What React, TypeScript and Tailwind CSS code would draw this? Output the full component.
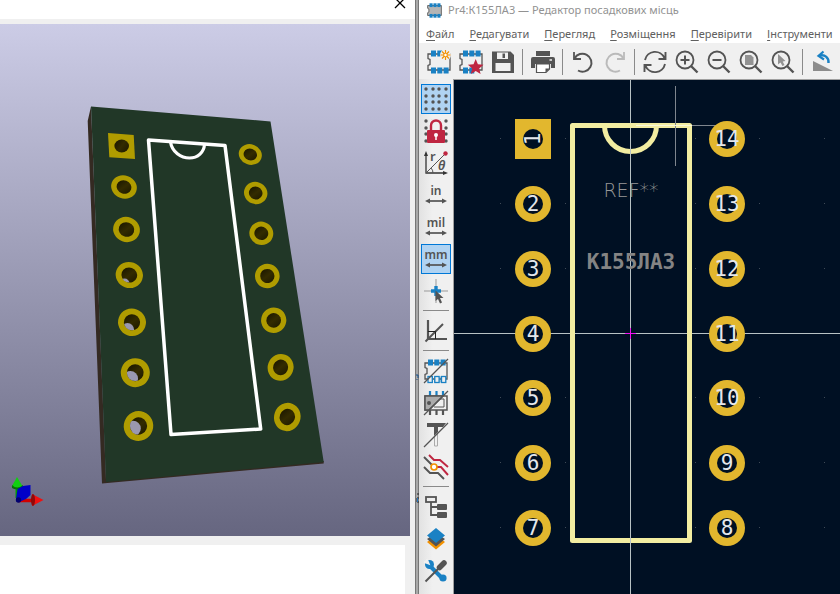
import type { ReactNode } from "react";

const INK = "#545454";
const BLUE = "#1a81c4";
const RED = "#bf2641";
const ORANGE = "#f29100";

function Icon({ children, size = 24 }: { children: ReactNode; size?: number }) {
  return (
    <svg width={size} height={size} viewBox="0 0 24 24" fill="none" stroke={INK} strokeWidth="1.5" aria-hidden="true" className="shrink-0 overflow-visible">
      {children}
    </svg>
  );
}

const OUTLINE = "M1 4H23V20H1V15.5L3 14.5V9.5L1 8.5Z";

function Chip({ fill = "none", top = 3, bottom = 3 }: { fill?: string; top?: number; bottom?: number }) {
  const xs = [4, 10.3, 16.6];
  return (
    <>
      <path d={OUTLINE} fill={fill} strokeWidth="1.3" />
      <g fill={BLUE} stroke="none">
        {xs.slice(0, top).map((x) => <rect key={x} x={x} y="0.5" width="5" height="6" />)}
        {xs.slice(0, bottom).map((x) => <rect key={x} x={x} y="17.5" width="5" height="6" />)}
      </g>
    </>
  );
}

const newIcon = (
  <Icon>
    <Chip top={2} />
    <circle cx="18.5" cy="5" r="5.5" fill="#f0f0f0" stroke="none" />
    <path d="M18.5 0v10M13.5 5h10M15 1.5l7 7M22 1.5l-7 7" stroke={ORANGE} strokeWidth="1.2" />
    <circle cx="18.5" cy="5" r="1.8" fill="#fff" stroke={ORANGE} strokeWidth="1" />
  </Icon>
);
const libraryIcon = (
  <Icon>
    <Chip bottom={2} />
    <path d="M16.7 9l2.2 5.3 5.6.4-4.300 3.700 1.400 5.500-4.900-3-4.900 3 1.400-5.500-4.300-3.700 5.600-.4z" fill={RED} stroke="none" />
  </Icon>
);
const saveIcon = (
  <Icon>
    <path d="M1 1.5H19.5L23 5V23H1Z" fill={INK} stroke="none" />
    <path d="M6 2.5H17V9H6ZM4.5 13H19.5V21H4.5Z" fill="#f0f0f0" stroke="none" />
    <path d="M11.5 3.5H14V8H11.5Z" fill={INK} stroke="none" />
  </Icon>
);
const printIcon = (
  <Icon>
    <path d="M5 1H19V6H5Z" fill={INK} stroke="none" />
    <path d="M2 7H22Q24 7 24 9V18H20V14H4V18H0V9Q0 7 2 7Z" fill={INK} stroke="none" />
    <path d="M5.5 14H18.5V19L15 22.5H5.5Z" fill="#fff" strokeWidth="1.2" />
    <path d="M18.5 18.5H14.5V22.5Z" fill={INK} stroke="none" />
    <path d="M18.5 10H21" stroke="#f0f0f0" />
  </Icon>
);
const undoIcon = (
  <Icon>
    <path d="M3 2V9H10" strokeWidth="1.8" />
    <path d="M3.5 8.5A9 9 0 1 1 7 20.5" strokeWidth="2" />
  </Icon>
);
const redoIcon = (
  <Icon>
    <g stroke="#bababa">
      <path d="M21 2V9H14" strokeWidth="1.8" />
      <path d="M20.5 8.5A9 9 0 1 0 17 20.5" strokeWidth="2" />
    </g>
  </Icon>
);
const refreshIcon = (
  <Icon>
    <g strokeWidth="1.9">
      <path d="M2 10A10.3 10.3 0 0 1 21.5 8M22.5 2V9H15.5" />
      <path d="M22 14A10.3 10.3 0 0 1 2.5 16M1.5 22V15H8.5" />
    </g>
  </Icon>
);

function Lens({ children }: { children: ReactNode }) {
  return (
    <Icon>
      <circle cx="10" cy="10" r="8.5" strokeWidth="1.8" />
      <path d="M16 16L22.5 22.5" strokeWidth="2.4" />
      {children}
    </Icon>
  );
}
const zoomInIcon = <Lens><path d="M5.5 10H14.5M10 5.5V14.5" strokeWidth="2" /></Lens>;
const zoomOutIcon = <Lens><path d="M5.5 10H14.5" strokeWidth="2" /></Lens>;
const zoomPageIcon = <Lens><path d="M6 5H12L14.5 7.5V15H6Z" fill="#929292" stroke="none" /></Lens>;
const zoomSelectIcon = (
  <Lens><path d="M7 4V14.5L9.5 12.5L11.5 16L13.5 15L11.7 11.5L14.5 11Z" fill="#929292" stroke="none" /></Lens>
);
const rotateIcon = (
  <Icon>
    <path d="M2 11L22 21H2Z" fill="#8c8c8c" stroke="none" />
    <path d="M9 5.5C14 4.5 18 7.5 17.5 13" stroke={BLUE} strokeWidth="2.4" />
    <path d="M12.5 1.5L7.5 5.8L13 9.5" stroke={BLUE} strokeWidth="2.2" />
  </Icon>
);

const GRID = [2, 9, 15, 22];
const dots = (
  <g fill={INK} stroke="none">
    {GRID.flatMap((y) => GRID.map((x) => <circle key={`${x}-${y}`} cx={x} cy={y} r="1.7" />))}
  </g>
);
const gridIcon = <Icon>{dots}</Icon>;
const lockIcon = (
  <Icon>
    {dots}
    <path d="M7 12V6.5A5 5 0 0 1 17 6.5V12" stroke="#f0f0f0" strokeWidth="5" fill="#f0f0f0" />
    <path d="M7 12V6.5A5 5 0 0 1 17 6.5V12" stroke={RED} strokeWidth="2.4" />
    <rect x="3" y="11" width="18" height="13" rx="1" fill={RED} stroke="none" />
    <circle cx="12" cy="16" r="2" fill="#fff" stroke="none" />
    <path d="M12 16V21" stroke="#fff" />
  </Icon>
);
const polarIcon = (
  <Icon>
    <path d="M2 4V22H20" stroke="#333" strokeWidth="1.3" />
    <path d="M2 0L4 5H0ZM24 22L19 20V24Z" fill="#333" stroke="none" />
    <path d="M2 22L21 3M7 17Q9 19 9 22" strokeWidth="1" />
    <circle cx="21.5" cy="2.5" r="2.2" fill={RED} stroke="none" />
    <g fill={INK} stroke="none" className="font-['Noto_Sans',sans-serif]">
      <text x="6" y="10" fontSize="13" fontWeight="600">r</text>
      <text x="14" y="19" fontSize="13" fontWeight="600" fontStyle="italic">θ</text>
    </g>
  </Icon>
);
function Unit({ name }: { name: string }) {
  return (
    <Icon>
      <text x="12" y="12" textAnchor="middle" fontSize="12" fontWeight="600" fill={INK} stroke="none" className="font-['Noto_Sans',sans-serif]">{name}</text>
      <path d="M4 18H20" strokeWidth="1.7" />
      <path d="M1 18L6 15.5V20.5ZM23 18L18 15.5V20.5Z" fill={INK} stroke="none" />
    </Icon>
  );
}
const cursorIcon = (
  <Icon>
    <path d="M12 0V24M0 12H24" stroke="#999" strokeWidth="1" />
    <path d="M12 7V17M7 12H17" stroke={BLUE} strokeWidth="3.4" />
    <path d="M11.5 11.5V22L14 20L16 24.5L18 23.5L16 19L19.5 19Z" fill={INK} stroke="none" />
  </Icon>
);
const angleIcon = (
  <Icon>
    <path d="M4 1V20H23" strokeWidth="2.2" />
    <path d="M1.5 22.5L19 5" strokeWidth="2" />
    <path d="M4 12.5H11.5V20" stroke="#222" strokeWidth="1" />
  </Icon>
);
const padModeIcon = (
  <Icon>
    <Chip />
    <g fill="#f0f0f0" stroke={BLUE} strokeWidth="1.3">
      <rect x="4" y="17.5" width="4.3" height="6" />
      <rect x="10.8" y="17.5" width="4.3" height="6" />
      <rect x="17.5" y="17.5" width="4.3" height="6" />
    </g>
    <path d="M0 24L24 0" strokeWidth="1.3" />
  </Icon>
);
const graphicModeIcon = (
  <Icon>
    <path d="M6 0V5M12.5 0V5M19 0V5" stroke={BLUE} strokeWidth="2.2" />
    <path d="M6 19V24M12.5 19V24M19 19V24" strokeWidth="2.2" />
    <rect x="1" y="5" width="22" height="14" />
    <path d="M1 5H19L5 19H1Z" fill="#ababab" />
    <path d="M16 8H20V16H10" strokeWidth="1" />
    <circle cx="5" cy="12" r="2" fill={INK} stroke="none" />
    <path d="M0 24L24 0" strokeWidth="1.3" />
  </Icon>
);
const textModeIcon = (
  <Icon>
    <path d="M3 0H22L19 4H14V9L10 13V4H3Z" fill={INK} stroke="none" />
    <path d="M10.5 14V23H13.5V10" stroke="#aaa" strokeWidth="1" />
    <path d="M0 24L24 0" strokeWidth="1.3" />
  </Icon>
);
const contrastIcon = (
  <Icon>
    <path d="M0 2L8 10M0 12L6 18H14L20 24" strokeWidth="1.9" />
    <path d="M5 0L10 5H16L24 12M12 12H17L24 20" stroke={RED} strokeWidth="1.9" />
    <circle cx="10" cy="12" r="3" fill="#fff" stroke={ORANGE} strokeWidth="1.7" />
  </Icon>
);
const treeIcon = (
  <Icon>
    <rect x="2" y="2" width="10" height="5" strokeWidth="1.8" />
    <path d="M7 7V20H13M7 12H13" strokeWidth="1.8" />
    <rect x="13" y="9" width="10" height="6" rx="1" fill={INK} stroke="none" />
    <rect x="13" y="17" width="10" height="6" rx="1" fill={INK} stroke="none" />
  </Icon>
);
const layersIcon = (
  <Icon>
    <path d="M3 15L12 8L21 15L12 22.5Z" fill={ORANGE} stroke="none" />
    <path d="M3 12L12 6L21 12L12 19.5Z" fill={INK} stroke="none" />
    <path d="M3 8.5L12 1L21 8.5L12 16Z" fill={BLUE} stroke="none" />
  </Icon>
);
const toolsIcon = (
  <Icon>
    <path d="M6 7L18 19" stroke={BLUE} strokeWidth="4" />
    <circle cx="5.5" cy="5.5" r="4.5" fill={BLUE} stroke="none" />
    <circle cx="19" cy="19" r="3.6" fill={BLUE} stroke="none" />
    <path d="M0 3L5 5L3 0" fill="#f0f0f0" stroke="#f0f0f0" />
    <path d="M1.5 22.5L14 10" strokeWidth="1.9" />
    <path d="M15.5 8.5L20 4" strokeWidth="5.5" strokeLinecap="round" />
  </Icon>
);

type Item = { label: string; icon: ReactNode; on?: boolean } | null;

const topItems: Item[] = [
  { label: "Нове посадкове місце", icon: newIcon },
  { label: "Редактор бібліотеки", icon: libraryIcon },
  { label: "Зберегти", icon: saveIcon },
  null,
  { label: "Друк", icon: printIcon },
  null,
  { label: "Скасувати", icon: undoIcon },
  { label: "Повторити", icon: redoIcon },
  null,
  { label: "Оновити", icon: refreshIcon },
  { label: "Збільшити", icon: zoomInIcon },
  { label: "Зменшити", icon: zoomOutIcon },
  { label: "Вмістити сторінку", icon: zoomPageIcon },
  { label: "Масштабувати вибране", icon: zoomSelectIcon },
  null,
  { label: "Повернути", icon: rotateIcon },
];

const sideItems: Item[] = [
  { label: "Сітка", icon: gridIcon, on: true },
  { label: "Блокування сітки", icon: lockIcon },
  { label: "Полярні координати", icon: polarIcon },
  { label: "Дюйми", icon: <Unit name="in" /> },
  { label: "Міли", icon: <Unit name="mil" /> },
  { label: "Міліметри", icon: <Unit name="mm" />, on: true },
  { label: "Курсор", icon: cursorIcon },
  null,
  { label: "Кут ліній", icon: angleIcon },
  null,
  { label: "Контури майданчиків", icon: padModeIcon },
  { label: "Контури графіки", icon: graphicModeIcon },
  { label: "Контури тексту", icon: textModeIcon },
  { label: "Контраст", icon: contrastIcon },
  null,
  { label: "Дерево", icon: treeIcon },
  { label: "Шари", icon: layersIcon },
  { label: "Властивості", icon: toolsIcon },
];

const menus = ["Файл", "Редагувати", "Перегляд", "Розміщення", "Перевірити", "Інструменти"];

// cx, cy, rx, ry of every plated ring on the 3D board
const rings = [
  [124, 187, 13, 11.5], [126.5, 229.5, 13.5, 12.5], [129.3, 275, 13.7, 13],
  [132, 322.3, 14, 13.7], [135.3, 372.7, 14.5, 14.5], [138.5, 426, 14.7, 15],
  [250.3, 154.5, 11.7, 10.2], [255.7, 193, 11.8, 11], [261.3, 233.3, 12, 11.6],
  [267.3, 276, 12.3, 12.2], [273.7, 320.3, 12.6, 12.7], [280.6, 367.4, 12.9, 13.5],
  [287.3, 417, 13.2, 14.2],
];
// background seen through the lower holes: ring index, cx, cy, radius
const throughHoles = [[2, 124.5, 283.5, 5], [3, 127.5, 329.5, 6.5], [4, 130.5, 378.5, 7.5], [5, 133, 428.5, 7.8]];

function Board3D() {
  return (
    <svg viewBox="0 24 410 512" preserveAspectRatio="xMinYMin slice" className="block size-full" role="img" aria-label="3D">
      <defs>
        <linearGradient id="sky" x1="0" y1="0" x2="0" y2="1">
          <stop offset="0" stopColor="#ccccE6" />
          <stop offset="1" stopColor="#666680" />
        </linearGradient>
        <linearGradient id="hole" x1="0" y1="0.2" x2="1" y2="0.8">
          <stop offset="0" stopColor="#1c1800" />
          <stop offset="0.5" stopColor="#332b00" />
          <stop offset="1" stopColor="#201b00" />
        </linearGradient>
        {throughHoles.map(([i]) => (
          <clipPath key={i} id={`hole${i}`}>
            <ellipse cx={rings[i][0]} cy={rings[i][1]} rx={rings[i][2] * 0.58} ry={rings[i][3] * 0.58} />
          </clipPath>
        ))}
      </defs>
      <rect y="24" width="410" height="512" fill="url(#sky)" />
      <path d="M91 106.5L87.7 121L102 483.5L323.7 463.5V461L106 480Z" fill="#342a22" />
      <path d="M91 106.5L270.5 121.5L323.7 462L106 482Z" fill="#213727" />
      <path d="M148.5 140L225 145.5L260.7 429L171 434.5Z" fill="none" stroke="#fff" strokeWidth="3.5" strokeLinejoin="round" />
      <path d="M170.5 142C172 152 181 158 189.5 158C198 158 204 152 204.5 144.5" fill="none" stroke="#fff" strokeWidth="3.2" />
      <path d="M108 133L133.7 135L135 159L109.3 157.3Z" fill="#b09c00" />
      <ellipse cx="121.7" cy="146" rx="7.3" ry="6.5" fill="url(#hole)" />
      {rings.map(([cx, cy, rx, ry]) => (
        <g key={cy} transform={`rotate(20 ${cx} ${cy})`}>
          <ellipse cx={cx} cy={cy} rx={rx} ry={ry} fill="#b09c00" />
          <ellipse cx={cx} cy={cy} rx={rx * 0.58} ry={ry * 0.58} fill="url(#hole)" />
        </g>
      ))}
      {throughHoles.map(([i, cx, cy, r]) => (
        <circle key={i} cx={cx} cy={cy} r={r} fill="#9a98b0" clipPath={`url(#hole${i})`} />
      ))}
      <path d="M17 498V486" stroke="#00a000" strokeWidth="3" />
      <path d="M17 477L23 487Q17 490 11.5 487Z" fill="#10d010" />
      <path d="M12 485Q17 490 23 485V487Q17 491 12 488Z" fill="#087008" />
      <path d="M18 500.5H33" stroke="#d00000" strokeWidth="3.5" />
      <path d="M43.5 500L32 494V506Z" fill="#f01010" />
      <ellipse cx="33" cy="500" rx="2" ry="6" fill="#900808" />
      <path d="M17.5 489L23 486L30.5 485V495L26 499L19 502L16 499Z" fill="#0000c8" />
      <circle cx="18.5" cy="500" r="2.7" fill="#000070" />
    </svg>
  );
}

const rows = [139, 204, 269, 334, 398, 463, 528];
const dotColumns = [500, 565, 695, 759, 824];

function FootprintCanvas() {
  return (
    <svg viewBox="454 80 386 514" preserveAspectRatio="xMinYMin slice" className="block size-full bg-[#001023]" role="img" aria-label="К155ЛА3">
      {rows.filter((y) => y !== 334).flatMap((y) =>
        dotColumns.map((x) => <rect key={`${x}-${y}`} x={x} y={y - 1} width="1" height="1" fill="#3f4a56" />),
      )}
      <path d="M454 333.5H2000" stroke="#b8c2c4" />
      <path d="M604.5 125.5A26 26 0 0 0 656.5 125.5" fill="none" stroke="#f2eda1" strokeWidth="5" />
      <rect x="572.5" y="125.5" width="117" height="415" fill="none" stroke="#f2eda1" strokeWidth="5" strokeLinejoin="round" />
      <path d="M630.5 80V2000" stroke="#b8c2c4" />
      <path d="M606 125.5H656" stroke="#f2eda1" strokeWidth="5" />
      <path d="M675.5 86V166M692 125.5H716" stroke="#7f868e" />
      <path d="M636 125.5H692" stroke="#fbf9dc" />
      <path d="M630.5 328V339M625 333.5H636" stroke="#f010f0" />
      <g fill="#848484" textAnchor="middle">
        <text x="631" y="197" fontSize="19" fontWeight="200" fill="#989898" className="font-['DejaVu_Sans',sans-serif]">REF**</text>
        <text x="631" y="269" fontSize="21" fontWeight="700" className="font-['DejaVu_Sans_Mono',monospace]">К155ЛА3</text>
      </g>
      {rows.map((y, i) => (
        <g key={y} fill="#e2b72e">
          {i === 0 ? <rect x="515" y="119" width="36" height="40" /> : <circle cx="533" cy={y} r="18" />}
          <circle cx="727" cy={y} r="18" />
          <g fill="#001023">
            <circle cx="533" cy={y} r="10" />
            <circle cx="727" cy={y} r="10" />
          </g>
          <g fill="#e4e7ec" fontSize="21" textAnchor="middle" className="font-['DejaVu_Sans_Mono',monospace]">
            <text x="533" y={y + 7} transform={i === 0 ? "rotate(-90 533 139)" : undefined}>{i + 1}</text>
            <text x="727" y={y + 7}>{14 - i}</text>
          </g>
        </g>
      ))}
    </svg>
  );
}

export default function App() {
  return (
    <div className="grid h-screen grid-cols-[415fr_4px_421fr] overflow-hidden bg-white font-['Noto_Sans','Open_Sans',sans-serif]">
      <section className="flex min-w-0 flex-col bg-[#f0f0f0]">
        <header className="flex h-[19px] shrink-0 justify-end bg-white pr-2">
          <button type="button" aria-label="Закрити" className="flex h-4 w-3.5 items-start justify-center text-black">
            <svg width="12" height="12" viewBox="0 0 12 12" className="block" aria-hidden="true">
              <path d="M1 -2L11 8M11 -2L1 8" stroke="currentColor" strokeWidth="1.3" />
            </svg>
          </button>
        </header>
        <div className="min-h-0 flex-1 pt-[5px] pr-[5px]"><Board3D /></div>
        <footer className="h-[58px] shrink-0 pt-[9px] pr-2.5"><div className="h-full bg-white" /></footer>
      </section>

      <div className="relative border-x border-x-[#777777] bg-[#a9a9a9]">
        <svg width="4" height="130" viewBox="0 0 4 130" className="absolute top-[374px] -left-px" aria-hidden="true">
          <path d="M1 1H3V4M2 5V6" stroke="#15508c" fill="none" />
          <path d="M2 120H4M4 124H2V128H4" stroke="#222" fill="none" />
          <path d="M2.5 124V128" stroke="#2878c0" />
        </svg>
      </div>

      <section className="flex min-w-0 flex-col">
        <header className="flex h-5 shrink-0 items-center gap-1.5 pl-2">
          <Icon size={15}><Chip fill="#b5b5b5" /></Icon>
          <h1 className="truncate text-[11px] text-[#929292]">Pr4:К155ЛА3 — Редактор посадкових місць</h1>
        </header>
        <nav className="flex h-[23px] shrink-0 items-center gap-[15px] overflow-hidden pt-1.5 pl-[7px]">
          {menus.map((m) => (
            <button key={m} type="button" className="text-[11px] whitespace-nowrap text-[#606060]">
              <span className="underline underline-offset-2">{m[0]}</span>{m.slice(1)}
            </button>
          ))}
        </nav>
        <div role="toolbar" className="flex h-9 shrink-0 items-center overflow-hidden bg-[#f0f0f0] pt-0.5 pl-1">
          {topItems.map((item, i) =>
            item ? (
              <button key={i} type="button" aria-label={item.label} className="flex h-8 w-8 shrink-0 items-center justify-center">{item.icon}</button>
            ) : (
              <div key={i} className="flex w-2 shrink-0 justify-start pl-[3px]"><div className="h-[26px] w-px bg-[#8a8a8a]" /></div>
            ),
          )}
        </div>
        <div className="flex min-h-0 flex-1">
          <div role="toolbar" className="flex w-[34px] shrink-0 flex-col overflow-hidden bg-linear-to-r from-[#e2e2e2] to-[#f0f0f0] to-40% pt-1 pl-0.5">
            {sideItems.map((item, i) =>
              item ? (
                <button
                  key={i}
                  type="button"
                  aria-label={item.label}
                  aria-pressed={!!item.on}
                  className={`my-px flex h-[30px] w-[30px] shrink-0 items-center justify-center ${item.on ? "border border-[#0078d7] bg-[#b0d3f2]" : ""}`}
                >
                  {item.icon}
                </button>
              ) : (
                <div key={i} className="flex h-2 w-[30px] shrink-0 items-start justify-center pt-[3px]"><div className="h-px w-[26px] bg-[#8a8a8a]" /></div>
              ),
            )}
          </div>
          <div className="min-w-0 flex-1 border-t border-l border-[#a0a0a0]"><FootprintCanvas /></div>
        </div>
      </section>
    </div>
  );
}
